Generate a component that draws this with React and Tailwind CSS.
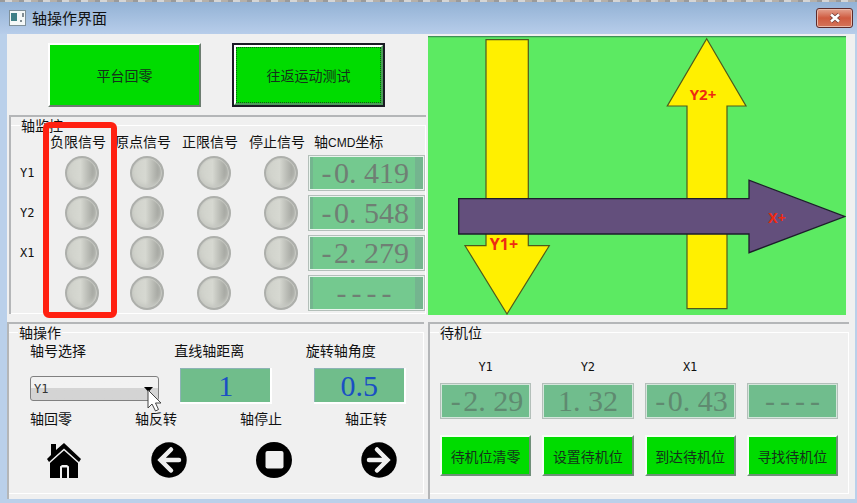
import React from 'react';

const axes = [
  { name: 'Y1', position: '-0.419' },
  { name: 'Y2', position: '-0.548' },
  { name: 'X1', position: '-2.279' },
  { name: '', position: '----' },
];

const signals = ['负限信号', '原点信号', '正限信号', '停止信号'];

const standby = [
  { name: 'Y1', value: '-2.29', action: '待机位清零' },
  { name: 'Y2', value: '1.32', action: '设置待机位' },
  { name: 'X1', value: '-0.43', action: '到达待机位' },
  { name: '', value: '----', action: '寻找待机位' },
];

// Digits are half an em wide, the sign and the point get a cell of the same width
const Digits = ({ value }) => (
  <span className="font-['Liberation_Serif',serif] text-[30px] leading-8 whitespace-nowrap">
    {value.split(/([-.])/).map((part, index) => {
      if (part === '-') {
        return <span key={index} className="inline-block w-[15px] text-center">-</span>;
      }
      if (part === '.') {
        return <span key={index} className="inline-block w-[15px] text-left">.</span>;
      }
      return part;
    })}
  </span>
);

const Lamp = ({ label }) => (
  <span
    role="img"
    aria-label={label}
    className="ml-[15px] block size-[34px] rounded-full border-2 border-[#adafab] bg-linear-to-r from-[#cfd1ca] via-[#d6d8d1] via-45% to-[#a9aba5] to-85% shadow-[inset_0_0_1px_1px_#c9cbc5,inset_0_-3px_4px_#c6c8c2]"
  />
);

const Panel = ({ title, className, children }) => (
  <section className={`relative border-t-2 border-l-2 border-[#b4b6b8] ${className}`}>
    <fieldset className="min-w-0 border-t border-r border-b border-white">
      <legend className="ml-[9px] px-px text-sm leading-4">{title}</legend>
      {children}
    </fieldset>
  </section>
);

const AxisDiagram = () => (
  <svg viewBox="0 0 418 279" className="block w-full bg-[#5cea62]" role="img" aria-label="X Y1 Y2">
    <path d="M0 .5H418" stroke="#3d8f55" strokeWidth="1.5" />
    <g stroke="#4f5a1c" strokeWidth="1.2">
      <path d="M58 3.7H100.3V209.7H121.3L79 278L37 209.7H58Z" fill="#fff000" />
      <path d="M278.7 2.7L318 70H299V272.7H259V70H239.3Z" fill="#fff000" />
    </g>
    <path d="M30.7 162.7H321V144.2L416.7 180.5L321 216.7V198H30.7Z" fill="#634f7c" stroke="#1d1d2b" strokeWidth="1.3" />
    <g fill="#ee2a12" fontFamily="Open Sans, sans-serif" fontWeight="700" fontSize="15" textAnchor="middle">
      <text x="76" y="214" fontSize="16">Y1+</text>
      <text x="275" y="64">Y2+</text>
      <text x="349" y="187" fontSize="14">X+</text>
    </g>
  </svg>
);

const HomeIcon = () => (
  <svg viewBox="0 0 36 36" className="size-9" aria-hidden="true">
    <path d="M5 2H10V8L18 1L35 17L33 20L18 6.5L3 20L1 17L5 13Z" fill="#000" />
    <path d="M18 8.5L32 21V36H23V24.500L21 23H16L14 24.500V36H4V21Z" fill="#000" />
    <path d="M16 36V25.500H21V36Z" fill="#000" />
  </svg>
);

const BackIcon = () => (
  <svg viewBox="0 0 36 36" className="size-9" aria-hidden="true">
    <circle cx="18" cy="18" r="17.700" fill="#000" />
    <path d="M20 7.500L9.500 18L20 28.500M10 18H28" fill="none" stroke="#f0f0f0" strokeWidth="4.500" strokeLinecap="round" />
  </svg>
);

const StopIcon = () => (
  <svg viewBox="0 0 36 36" className="size-9" aria-hidden="true">
    <circle cx="18" cy="18" r="18" fill="#000" />
    <rect x="9.500" y="9" width="18" height="17.500" rx="2" fill="#f0f0f0" />
  </svg>
);

const ForwardIcon = () => (
  <svg viewBox="0 0 36 36" className="size-9" aria-hidden="true">
    <circle cx="18" cy="18" r="17.700" fill="#000" />
    <path d="M16 7.500L26.500 18L16 28.500M26 18H8" fill="none" stroke="#f0f0f0" strokeWidth="4.500" strokeLinecap="round" />
  </svg>
);

const operations = [
  { label: '轴回零', Icon: HomeIcon },
  { label: '轴反转', Icon: BackIcon },
  { label: '轴停止', Icon: StopIcon },
  { label: '轴正转', Icon: ForwardIcon },
];

const TitleBar = () => (
  <header className="flex h-8 items-center bg-linear-to-b from-[#93b2d5] to-[#b7cdea] pr-1 pb-px pl-[9px]">
    <svg viewBox="0 0 17 16" className="h-4 w-[17px]" aria-hidden="true">
      <rect x=".5" y=".5" width="16" height="15" fill="#f4f8f8" stroke="#7f9099" />
      <rect x="2" y="3" width="6" height="8" fill="#3f7f86" />
      <path d="M14 3V7M11 11H13" stroke="#5b6a72" strokeWidth="1.500" />
    </svg>
    <h1 className="ml-1.5 flex-1 text-[15px] leading-5">轴操作界面</h1>
    <button
      type="button"
      aria-label="关闭"
      className="flex h-5 w-[37px] items-center justify-center rounded-[3px] border border-[#5c2a2a] bg-linear-to-b from-[#e3a18f] via-[#cf5a3f] to-[#d4745a] shadow-[inset_0_0_0_1px_#e9b8a8]"
    >
      <svg viewBox="0 0 12 10" className="h-[10px] w-3" aria-hidden="true">
        <path d="M2 1.500L10 8.500M10 1.500L2 8.500" stroke="#6b3a3a" strokeWidth="4" />
        <path d="M2 1.500L10 8.500M10 1.500L2 8.500" stroke="#fff" strokeWidth="2.500" />
      </svg>
    </button>
  </header>
);

const MonitorPanel = () => (
  <Panel title="轴监控" className="mr-[2px] ml-[2px]">
    <table className="w-full table-fixed border-collapse text-left text-sm">
      <colgroup>
        <col className="w-[39px]" />
        <col className="w-[65px]" />
        <col className="w-[67px]" />
        <col className="w-[67px]" />
        <col className="w-[59px]" />
        <col />
      </colgroup>
      <thead>
        <tr className="h-[20px] leading-4 whitespace-nowrap">
          <td />
          {signals.map((signal) => (
            <th key={signal} scope="col" className="p-0 align-top font-normal">{signal}</th>
          ))}
          <th scope="col" className="py-0 pr-0 pl-1.5 align-top font-normal">
            轴<span className="font-['Liberation_Sans',sans-serif] text-xs leading-4">CMD</span>坐标
          </th>
        </tr>
      </thead>
      <tbody>
        {axes.map((axis, index) => (
          <tr key={index} className="h-10">
            <th scope="row" className="py-0 pr-0 pl-[9px] font-['DejaVu_Sans_Mono',monospace] text-xs font-normal">{axis.name}</th>
            {signals.map((signal) => (
              <td key={signal} className="p-0"><Lamp label={signal} /></td>
            ))}
            <td className="p-0">
              <output className="flex h-9 border border-[#b3bfb9] bg-[#74b58f] p-px pr-[9px] pl-1 text-[#6f7f74] shadow-[inset_0_0_0_1px_#eaf4ee]">
                <span className="flex flex-1 items-center justify-center bg-[#74c98f]"><Digits value={axis.position} /></span>
              </output>
            </td>
          </tr>
        ))}
      </tbody>
    </table>
    <div className="pointer-events-none absolute top-[5px] left-8 h-[196px] w-[74px] rounded-md border-6 border-[#ff2010]" />
  </Panel>
);

const inputClass =
  "h-[34px] w-[90px] border-t border-l border-[#8db3b5] bg-[#70bd8b] text-center font-['Liberation_Serif',serif] text-[30px] leading-8 text-[#1a4fc4] shadow-[1px_1px_0_1px_#fff]";

const OperationPanel = () => (
  <Panel title="轴操作" className="mr-1 flex-1">
    <div className="grid grid-cols-[144fr_131fr_117fr] pt-[2px] pl-[21px] text-sm leading-4">
      <div>
        <label htmlFor="axis" className="block">轴号选择</label>
        <div className="relative mt-[18px] w-[129px]">
          <select
            id="axis"
            defaultValue="Y1"
            className="block h-[25px] w-full appearance-none rounded-[3px] border border-[#808080] bg-linear-to-b from-[#f2f2f2] from-50% to-[#d4d4d4] to-50% pl-[3px] font-['DejaVu_Sans_Mono',monospace] text-xs text-[#333]"
          >
            <option>Y1</option>
            <option>Y2</option>
            <option>X1</option>
          </select>
          <svg viewBox="0 0 20 28" className="pointer-events-none absolute top-2.5 left-[114px] h-7 w-5" aria-hidden="true">
            <path d="M0 1H9L4.500 6Z" fill="#000" />
            <path d="M4 4V22L8 18L11.500 25L14.500 23.500L11.500 17H17Z" fill="#fff" stroke="#444" />
          </svg>
        </div>
      </div>
      <div>
        <label htmlFor="distance" className="block">直线轴距离</label>
        <input id="distance" type="text" defaultValue="1" className={`mt-2.5 ml-1.5 block ${inputClass}`} />
      </div>
      <div>
        <label htmlFor="angle" className="block">旋转轴角度</label>
        <input id="angle" type="text" defaultValue="0.5" className={`mt-2.5 ml-2 block ${inputClass}`} />
      </div>
    </div>
    <div className="grid grid-cols-[105fr_105fr_105fr_78fr] pt-2 pb-[15px] pl-[21px] text-sm leading-4">
      {operations.map(({ label, Icon }) => (
        <button key={label} type="button" className="flex flex-col items-start gap-4">
          {label}
          <span className="ml-4"><Icon /></span>
        </button>
      ))}
    </div>
  </Panel>
);

const StandbyPanel = () => (
  <Panel title="待机位" className="mr-1.5 flex-1">
    <div className="grid grid-cols-4 gap-[11px] px-[10px] pt-[19px] pb-[17px]">
      {standby.map((item) => (
        <div key={item.action}>
          <div className="h-4 text-center font-['DejaVu_Sans_Mono',monospace] text-xs leading-4">{item.name}</div>
          <output className="mt-2 flex h-9 items-center justify-center border border-[#b3bfb9] bg-[#70bd8d] text-[#5f8a70] shadow-[inset_0_0_0_1px_#d5e6dc]">
            <Digits value={item.value} />
          </output>
          <button
            type="button"
            className="mt-4 h-[41px] w-full border-2 border-t-[#f4fff4] border-r-[#6f8f78] border-b-[#6f8f78] border-l-[#f4fff4] bg-[#00dc00] text-sm whitespace-nowrap text-[#14301a]"
          >
            {item.action}
          </button>
        </div>
      ))}
    </div>
  </Panel>
);

const App = () => {
  return (
    <div className="flex min-h-screen flex-col bg-[#bad0ea] font-['Noto_Sans_CJK_SC',sans-serif] text-[#111]">
      <div className="h-[2px] bg-[repeating-linear-gradient(90deg,#9a9a9a_0_5px,#d5d5d5_5px_12px,#b5b0aa_12px_19px)]" />
      <TitleBar />
      <main className="mr-[2px] mb-1 ml-[7px] grid flex-1 grid-cols-[421fr_427fr] bg-[#f0f0f0]">
        <div className="flex flex-col">
          <div className="flex gap-[31px] pt-[9px] pb-2 pl-[41px] text-sm text-[#14301a]">
            <button
              type="button"
              className="h-16 w-[153px] border-2 border-t-white border-r-[#6c7c70] border-b-[#6c7c70] border-l-white bg-[#00dc00]"
            >
              平台回零
            </button>
            <button type="button" className="h-16 w-[153px] border-2 border-[#1a1a24] bg-[#00dc00]">
              <span className="flex h-full items-center justify-center border-2 border-t-white border-r-[#4f9a5c] border-b-[#4f9a5c] border-l-white">
                <span className="flex h-full w-full items-center justify-center border border-dotted border-[#0a5a14]">往返运动测试</span>
              </span>
            </button>
          </div>
          <MonitorPanel />
          <div className="h-2" />
          <OperationPanel />
        </div>
        <div className="flex flex-col">
          <div className="mt-[2px] mr-[9px] mb-[7px]">
            <AxisDiagram />
          </div>
          <StandbyPanel />
        </div>
      </main>
    </div>
  );
};

export default App;
